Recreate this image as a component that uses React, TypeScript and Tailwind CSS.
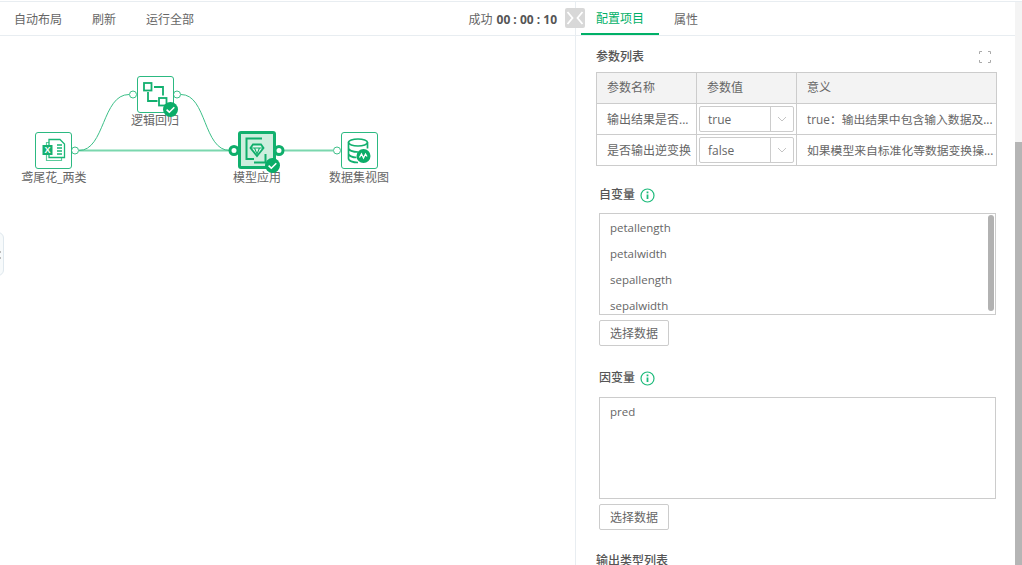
const FONT = "font-['Open_Sans','Noto_Sans_CJK_SC',sans-serif]"

const TOOLBAR = [
  { label: '自动布局', cls: 'w-[78px]' },
  { label: '刷新', cls: 'w-[54px]' },
  { label: '运行全部', cls: 'w-[60px]' },
]

function Port({ x, y, strong }: { x: number; y: number; strong?: boolean }) {
  return (
    <circle
      cx={x}
      cy={y}
      r={strong ? 4 : 3.5}
      fill="#fff"
      stroke={strong ? '#0fae6b' : '#3cbf88'}
      strokeWidth={strong ? 3 : 1}
    />
  )
}

function Check({ cls }: { cls: string }) {
  return (
    <svg viewBox="0 0 15 15" className={`absolute h-[15px] w-[15px] ${cls}`}>
      <circle cx="7.5" cy="7.5" r="7.5" fill="#0bad68" />
      <path d="M3.6 7.6l2.700 2.600 5-4.900" fill="none" stroke="#fff" strokeWidth="1.600" />
    </svg>
  )
}

function ExcelIcon() {
  return (
    <svg viewBox="0 0 28 28" className="h-7 w-7">
      <path d="M6.500 5.500H21.500V23.500H6.500z" fill="#fff" stroke="#5ccb9c" strokeWidth="1.200" />
      <path d="M9 2.500h11l4.500 4.500v13.500H9z" fill="#fff" stroke="#19b776" strokeWidth="1.300" />
      <path d="M17 8h5M17 11h5M17 14h5M17 17h5" stroke="#19b776" strokeWidth="1.300" />
      <rect x="2.500" y="8" width="10" height="10" fill="#14b070" />
      <text x="7.500" y="16.300" textAnchor="middle" fontSize="9" fontWeight="700" fill="#fff" fontFamily="Liberation Sans">X</text>
    </svg>
  )
}

function FlowIcon() {
  return (
    <svg viewBox="0 0 28 28" fill="none" stroke="#12b06f" strokeWidth="1.800" className="h-7 w-7">
      <rect x="2" y="2" width="7.500" height="7.500" />
      <rect x="17" y="17" width="7.500" height="7.500" />
      <path d="M12 6h9v8.500M6 11v9h9.500" />
    </svg>
  )
}

function GemIcon() {
  return (
    <svg viewBox="0 0 32 32" fill="none" stroke="#0fae6b" className="h-8 w-8">
      <path d="M21 4.500H5.500V25H13" strokeWidth="2" />
      <path d="M24.500 20v8.500H13" strokeWidth="2" />
      <path d="M12 10.500h8l2.500 3.500-6.500 8-6.500-8z" strokeWidth="1.800" fill="#e4f7ee" />
      <path d="M10 14h12M13.500 14l2.500 6 2.500-6" strokeWidth="1.100" />
    </svg>
  )
}

function DbIcon() {
  return (
    <svg viewBox="0 0 28 28" fill="none" className="h-7 w-7">
      <ellipse cx="12" cy="5.500" rx="9.500" ry="3.500" stroke="#12b06f" strokeWidth="1.700" />
      <path d="M2.500 5.500v16c0 2.300 4.200 4 9.500 4M21.500 5.500v6M2.500 11c0 2.300 4.200 4 9.500 4M2.500 16.500c0 2.300 4.200 4 8 4" stroke="#12b06f" strokeWidth="1.700" />
      <circle cx="17.500" cy="19" r="7" fill="#0bad68" />
      <path d="M13.500 20.500l2-3.500 2 4 2-4 1.500 2.500" stroke="#fff" strokeWidth="1.300" />
    </svg>
  )
}

function Node({ label, pos, labelPos, strong, children }: { label: string; pos: string; labelPos: string; strong?: boolean; children: React.ReactNode }) {
  return (
    <>
      <div
        className={`absolute flex items-center justify-center rounded-[3px] ${
          strong ? 'h-[38px] w-[38px] border-[3px] border-[#11b06e] bg-[#cdeede]' : 'h-[37px] w-[37px] border border-[#2cb981] bg-white'
        } ${pos}`}
      >
        {children}
      </div>
      <span className={`absolute w-[80px] text-center text-xs leading-4 text-[#666] ${labelPos}`}>{label}</span>
    </>
  )
}

function Canvas() {
  return (
    <div className="relative flex-1 overflow-hidden">
      <svg className="absolute left-0 top-0 h-[530px] w-[575px]" fill="none">
        <path d="M79 114.500H230" stroke="#7bd7ae" strokeWidth="1.800" />
        <path d="M79 114.500C105 114.500 102 58.500 129 58.500" stroke="#3cbf88" strokeWidth="1" />
        <path d="M181 58.500C207 58.500 203 114.500 230 114.500" stroke="#3cbf88" strokeWidth="1" />
        <path d="M283 114.500H333" stroke="#7bd7ae" strokeWidth="1.800" />
        <Port x={75} y={114.500} />
        <Port x={133} y={58.500} />
        <Port x={177} y={58.500} />
        <Port x={234} y={114.500} strong />
        <Port x={279} y={114.500} strong />
        <Port x={337} y={114.500} />
      </svg>
      <Node label="鸢尾花_两类" pos="left-[35px] top-[96px]" labelPos="left-[14px] top-[134px]">
        <ExcelIcon />
      </Node>
      <Node label="逻辑回归" pos="left-[137px] top-[40px]" labelPos="left-[115px] top-[77px]">
        <FlowIcon />
      </Node>
      <Check cls="left-[163px] top-[66px]" />
      <Node label="模型应用" pos="left-[238px] top-[95px]" labelPos="left-[217px] top-[134px]" strong>
        <GemIcon />
      </Node>
      <Check cls="left-[265px] top-[122px]" />
      <Node label="数据集视图" pos="left-[341px] top-[96px]" labelPos="left-[319px] top-[134px]">
        <DbIcon />
      </Node>
      <div className="absolute left-[-8px] top-[196px] h-[44px] w-3 rounded-md border border-[#dfe8ee] bg-[#f7fafb]" />
      <div className="absolute left-0 top-[215px] h-[2px] w-[1px] bg-[#bbb]" />
      <div className="absolute left-0 top-[221px] h-[2px] w-[1px] bg-[#bbb]" />
    </div>
  )
}

function Chevron() {
  return (
    <svg viewBox="0 0 10 6" fill="none" stroke="#c4c4c4" className="h-[6px] w-[10px]">
      <path d="M1 1l4 4 4-4" />
    </svg>
  )
}

function SelectBox({ value }: { value: string }) {
  return (
    <div className="flex h-[26px] w-[95px] items-center rounded-[2px] border border-[#ccc] bg-white">
      <span className="flex-1 pl-2 pt-[2px] text-xs text-[#666]">{value}</span>
      <span className="flex h-full w-[23px] items-center justify-center border-l border-[#ccc]">
        <Chevron />
      </span>
    </div>
  )
}

function Info() {
  return (
    <svg viewBox="0 0 15 15" fill="none" className="h-[15px] w-[15px]">
      <circle cx="7.500" cy="7.500" r="6.500" stroke="#1dbb7b" strokeWidth="1.200" />
      <path d="M7.500 6.500v4.500" stroke="#1dbb7b" strokeWidth="1.800" />
      <rect x="6.600" y="3.500" width="1.800" height="1.800" fill="#1dbb7b" />
    </svg>
  )
}

function SectionTitle({ title }: { title: string }) {
  return (
    <div className="flex h-[18px] items-center gap-[5px] pl-[3px] text-xs font-medium text-[#555]">
      {title}
      <Info />
    </div>
  )
}

function SelectButton() {
  return (
    <button className="ml-[3px] mt-[5px] block h-[26px] w-[70px] rounded-[2px] border border-[#ccc] bg-white pt-[2px] text-xs text-[#666]">
      选择数据
    </button>
  )
}

const ROWS = [
  { name: '输出结果是否...', value: 'true', desc: 'true：输出结果中包含输入数据及...' },
  { name: '是否输出逆变换', value: 'false', desc: '如果模型来自标准化等数据变换操...' },
]

function ParamTable() {
  return (
    <div className="mt-[7px] w-[401px] border-l border-t border-[#ccc] text-xs text-[#666]">
      <div className="grid h-[31px] grid-cols-[100px_100px_200px] bg-[#f3f3f3]">
        {['参数名称', '参数值', '意义'].map((t) => (
          <div key={t} className="flex items-center border-b border-r border-[#ccc] pl-[10px]">{t}</div>
        ))}
      </div>
      {ROWS.map((r) => (
        <div key={r.value} className="grid h-[31px] grid-cols-[100px_100px_200px]">
          <div className="flex items-center whitespace-nowrap border-b border-r border-[#ccc] pl-[10px] pt-[2px]">{r.name}</div>
          <div className="flex items-center justify-center border-b border-r border-[#ccc]">
            <SelectBox value={r.value} />
          </div>
          <div className="flex items-center overflow-hidden whitespace-nowrap border-b border-r border-[#ccc] pl-[10px] pt-[2px] text-[11.8px]">{r.desc}</div>
        </div>
      ))}
    </div>
  )
}

function App() {
  return (
    <div className={`flex h-[565px] w-[1022px] flex-col overflow-hidden bg-white ${FONT}`}>
      <div className="h-[2px] border-b border-[#e8edf1]" />
      <div className="relative flex min-h-0 flex-1">
        <div className="flex w-[576px] flex-col border-r border-[#e8edf1]">
          <div className="flex h-[34px] items-center border-b border-[#e8edf1] pl-[14px] pt-[2px] text-xs text-[#666]">
            {TOOLBAR.map((t) => (
              <span key={t.label} className={t.cls}>{t.label}</span>
            ))}
            <span className="ml-auto mr-[18px] flex gap-[4px] whitespace-nowrap">
              成功 <b className="font-bold text-[#555]">00 : 00 : 10</b>
            </span>
          </div>
          <Canvas />
        </div>

        <div className="absolute left-[565px] top-[6px] flex h-[20px] w-[20px] items-center justify-center rounded-[2px] bg-[#d8d8d8]">
          <svg viewBox="0 0 20 20" fill="none" stroke="#fff" strokeWidth="1.800" className="h-5 w-5">
            <path d="M2.500 4l5 6-5 6M17.500 4l-5 6 5 6" />
          </svg>
        </div>

        <div className="flex min-w-0 flex-1">
          <div className="min-w-0 flex-1">
            <div className="flex h-[34px] border-b border-[#e8edf1] pl-[5px] text-xs">
              <span className="flex h-[33px] w-[78px] items-center justify-center border-b-2 border-[#00b067] pt-[2px] text-[#00b067]">配置项目</span>
              <span className="ml-[15px] flex h-[33px] items-center pt-[2px] text-[#666]">属性</span>
            </div>
            <div className="pl-5">
              <div className="mt-[11px] flex h-[18px] items-center justify-between pr-[24px] pt-[2px] text-xs font-medium text-[#555]">
                参数列表
                <svg viewBox="0 0 12 12" fill="none" stroke="#aaa" className="h-3 w-3">
                  <path d="M.5 3V.5H3M9 .5h2.500V3M11.500 9v2.500H9M3 11.500H.5V9" />
                </svg>
              </div>
              <ParamTable />

              <div className="mt-[20px]">
                <SectionTitle title="自变量" />
              </div>
              <div className="relative ml-[3px] mt-[9px] h-[102px] w-[397px] overflow-hidden border border-[#ccc] pl-[10px] text-[11.5px] leading-[26px] text-[#666]">
                <div className="pt-[1px]">petallength</div>
                <div>petalwidth</div>
                <div>sepallength</div>
                <div>sepalwidth</div>
                <div className="absolute right-[1px] top-[1px] h-[96px] w-[6px] rounded-[3px] bg-[#b2b2b2]" />
              </div>
              <SelectButton />

              <div className="mt-[23px]">
                <SectionTitle title="因变量" />
              </div>
              <div className="ml-[3px] mt-[10px] h-[102px] w-[397px] border border-[#ccc] pl-[10px] pt-[1px] text-[11.5px] leading-[26px] text-[#666]">
                pred
              </div>
              <SelectButton />
              <div className="mt-[23px] text-xs font-medium text-[#555]">输出类型列表</div>
            </div>
          </div>
          <div className="flex w-[7px] flex-col bg-[#f4f4f4]">
            <div className="mt-[140px] flex-1 bg-[#b5b5b5]" />
          </div>
        </div>
      </div>
    </div>
  )
}

export default App
